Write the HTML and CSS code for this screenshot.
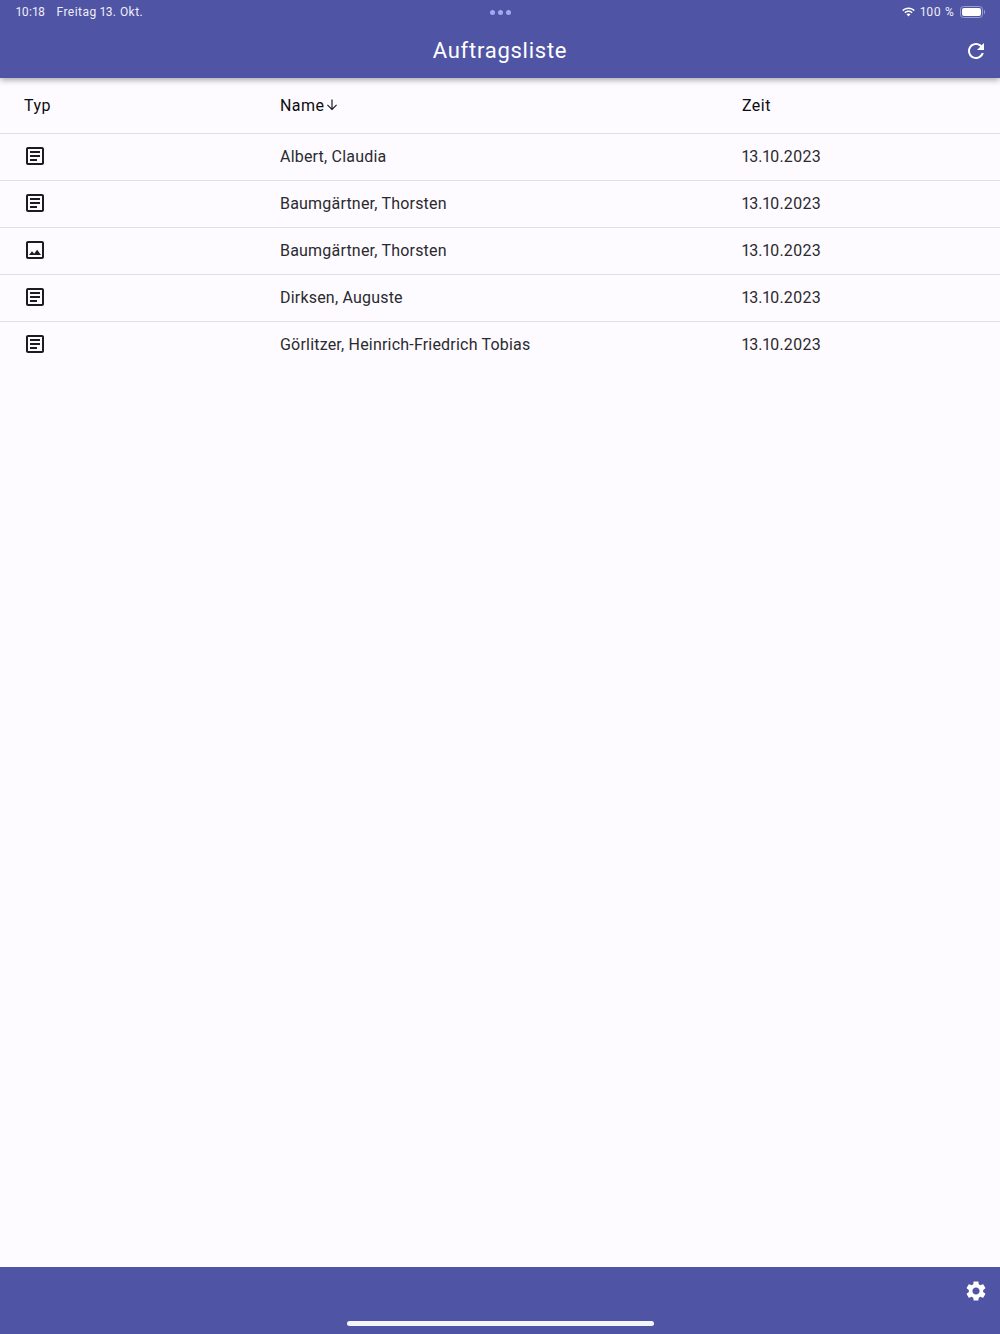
FILE: index.html
```html
<!DOCTYPE html>
<html lang="de">
<head>
<meta charset="utf-8">
<title>Auftragsliste</title>
<link rel="stylesheet" href="styles.css">
</head>
<body>
<div class="page">
  <header class="appbar">
    <div class="status">
      <div class="status-left"><span>10:18</span><span>Freitag 13. Okt.</span></div>
      <div class="dots"><i></i><i></i><i></i></div>
      <div class="status-right">
        <svg class="wifi" viewBox="0 0 16 12" width="15" height="11"><path fill="#fff" d="M8 2.2c2.2 0 4.2.9 5.7 2.3l1.1-1.2C13 1.6 10.600.6 8 .6S3 1.600 1.200 3.300l1.100 1.200C3.800 3.100 5.800 2.200 8 2.200zM8 5.500c1.300 0 2.500.5 3.400 1.300l1.100-1.200C11.300 4.500 9.700 3.900 8 3.900s-3.300.6-4.500 1.700l1.100 1.200C5.500 6 6.700 5.500 8 5.500zM8 7.200c-.9 0-1.600.3-2.200.8L8 10.400 10.200 8c-.6-.5-1.300-.8-2.200-.8z"/></svg>
        <span>100 %</span>
        <div class="battery"><div class="battery-body"><div class="battery-fill"></div></div><div class="battery-cap"></div></div>
      </div>
    </div>
    <div class="titlebar">
      <h1>Auftragsliste</h1>
      <svg class="bar-icon" viewBox="0 0 24 24" width="24" height="24"><path fill="#fff" d="M17.65 6.35C16.2 4.9 14.21 4 12 4c-4.42 0-7.99 3.58-7.99 8s3.57 8 7.99 8c3.73 0 6.84-2.55 7.73-6h-2.08c-.82 2.33-3.04 4-5.65 4-3.31 0-6-2.690-6-6s2.690-6 6-6c1.660 0 3.140.69 4.220 1.780L13 11h7V4l-2.350 2.350z"/></svg>
    </div>
  </header>

  <main class="list">
    <div class="row head">
      <div>Typ</div>
      <div class="name-head">Name<svg viewBox="0 0 16 16" width="16" height="16"><path fill="#1c1b1f" d="M13 8.200l-.8-.8L8.600 11V2.500H7.400V11L3.800 7.400l-.8.8L8 13.200z"/></svg></div>
      <div>Zeit</div>
    </div>
    <div class="row">
      <svg class="type" viewBox="0 0 24 24" width="24" height="24"><path d="M19 5v14H5V5h14m0-2H5c-1.100 0-2 .9-2 2v14c0 1.100.9 2 2 2h14c1.100 0 2-.9 2-2V5c0-1.100-.9-2-2-2zM14 17H7v-2h7v2zm3-4H7v-2h10v2zm0-4H7V7h10v2z"/></svg>
      <div>Albert, Claudia</div><div>13.10.2023</div>
    </div>
    <div class="row">
      <svg class="type" viewBox="0 0 24 24" width="24" height="24"><path d="M19 5v14H5V5h14m0-2H5c-1.100 0-2 .9-2 2v14c0 1.100.9 2 2 2h14c1.100 0 2-.9 2-2V5c0-1.100-.9-2-2-2zM14 17H7v-2h7v2zm3-4H7v-2h10v2zm0-4H7V7h10v2z"/></svg>
      <div>Baumgärtner, Thorsten</div><div>13.10.2023</div>
    </div>
    <div class="row">
      <svg class="type" viewBox="0 0 24 24" width="24" height="24"><path d="M19 5v14H5V5h14m0-2H5c-1.100 0-2 .9-2 2v14c0 1.100.9 2 2 2h14c1.100 0 2-.9 2-2V5c0-1.100-.9-2-2-2zm-4.860 8.860l-3 3.870L9 13.140 6 17h12l-3.860-5.140z"/></svg>
      <div>Baumgärtner, Thorsten</div><div>13.10.2023</div>
    </div>
    <div class="row">
      <svg class="type" viewBox="0 0 24 24" width="24" height="24"><path d="M19 5v14H5V5h14m0-2H5c-1.100 0-2 .9-2 2v14c0 1.100.9 2 2 2h14c1.100 0 2-.9 2-2V5c0-1.100-.9-2-2-2zM14 17H7v-2h7v2zm3-4H7v-2h10v2zm0-4H7V7h10v2z"/></svg>
      <div>Dirksen, Auguste</div><div>13.10.2023</div>
    </div>
    <div class="row last">
      <svg class="type" viewBox="0 0 24 24" width="24" height="24"><path d="M19 5v14H5V5h14m0-2H5c-1.100 0-2 .9-2 2v14c0 1.100.9 2 2 2h14c1.100 0 2-.9 2-2V5c0-1.100-.9-2-2-2zM14 17H7v-2h7v2zm3-4H7v-2h10v2zm0-4H7V7h10v2z"/></svg>
      <div>Görlitzer, Heinrich-Friedrich Tobias</div><div>13.10.2023</div>
    </div>
  </main>

  <footer class="bottombar">
    <div class="bottom-actions">
      <svg viewBox="0 0 24 24" width="24" height="24"><path fill="#fff" d="M19.140 12.940c.04-.3.06-.61.06-.94 0-.32-.02-.64-.07-.94l2.030-1.580c.18-.14.23-.41.12-.61l-1.920-3.320c-.12-.22-.37-.29-.59-.22l-2.390.96c-.5-.38-1.030-.7-1.620-.94l-.36-2.540c-.04-.24-.24-.41-.48-.41h-3.840c-.24 0-.43.17-.47.41l-.36 2.540c-.59.24-1.130.57-1.620.94l-2.390-.96c-.22-.08-.47 0-.59.22L2.740 8.870c-.12.21-.08.47.12.61l2.030 1.580c-.05.3-.09.63-.09.94s.02.64.07.94l-2.030 1.580c-.18.14-.23.41-.12.61l1.920 3.320c.12.22.37.29.59.22l2.390-.96c.5.38 1.030.7 1.620.94l.36 2.540c.05.24.24.41.48.41h3.840c.24 0 .44-.17.47-.41l.36-2.540c.59-.24 1.130-.56 1.620-.94l2.390.96c.22.08.47 0 .59-.22l1.920-3.320c.12-.22.07-.47-.12-.61l-2.010-1.580zM12 15.600c-1.980 0-3.600-1.620-3.600-3.600s1.620-3.600 3.600-3.600 3.600 1.620 3.600 3.600-1.620 3.600-3.600 3.600z"/></svg>
    </div>
    <div class="home-indicator"></div>
  </footer>
</div>
</body>
</html>
```
FILE: styles.css
```css
* { box-sizing: border-box; }
html, body { margin: 0; padding: 0; }
body { font-family: Roboto, "Liberation Sans", sans-serif; font-variant-numeric: proportional-nums; background: #fdfbff; color: #1c1b1f; }
.page { display: flex; flex-direction: column; height: 1334px; overflow: hidden; }

.appbar { height: 78px; background: #5054a5; color: #fff; box-shadow: 0 2px 6px rgba(0,0,0,.35); position: relative; z-index: 1; flex: none; }
.status { display: grid; grid-template-columns: 1fr auto 1fr; align-items: center; height: 24px; padding: 0 15px 0 16px; font-size: 12px; letter-spacing: .45px; color: #eeeef8; }
.status-left { display: flex; gap: 11px; }
.dots { display: flex; gap: 3px; }
.dots i { width: 5px; height: 5px; border-radius: 50%; background: #a3a8f0; display: block; }
.status-right { display: flex; justify-content: flex-end; align-items: center; gap: 4px; letter-spacing: .65px; }
.battery { display: flex; align-items: center; margin-left: 1px; }
.battery-body { width: 23px; height: 12px; border: 1px solid #9a9dd0; border-radius: 3.5px; padding: 1px; }
.battery-fill { width: 100%; height: 100%; background: #fff; border-radius: 2px; }
.battery-cap { width: 1.5px; height: 4px; background: #9a9dd0; border-radius: 0 1px 1px 0; margin-left: 1px; }

.titlebar { height: 54px; display: flex; align-items: center; justify-content: center; position: relative; }
.titlebar h1 { margin: 0 0 1px; font-size: 22px; font-weight: 400; letter-spacing: .75px; }
.bar-icon { position: absolute; right: 12px; top: 15px; }

.list { flex: 1; }
.row { display: grid; grid-template-columns: 256px 462px 1fr; align-items: center; height: 47px; padding: 0 0 1px 24px; border-bottom: 1px solid #e1dfe3; font-size: 16px; letter-spacing: .2px; color: #2b2a2e; }
.row.last { border-bottom: 0; height: 46px; padding-bottom: 2px; }
.row.head { height: 56px; padding-bottom: 0; font-weight: 400; letter-spacing: .45px; color: #0c0b0f; }
.name-head { display: flex; align-items: center; }
.name-head svg { margin-top: -2px; }
.type { fill: #1c1b1f; margin: 0 0 1px -1px; }
.row.last .type { margin-bottom: 0; }

.bottombar { height: 67px; background: #5054a5; flex: none; display: flex; flex-direction: column; }
.bottom-actions { display: flex; justify-content: flex-end; padding: 12px 12px 0; height: 54px; }
.home-indicator { width: 307px; height: 5px; border-radius: 3px; background: #f4f4fb; align-self: center; }
```
